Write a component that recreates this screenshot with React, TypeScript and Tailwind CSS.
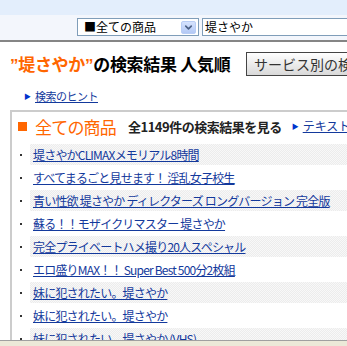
import { ChevronDown } from "lucide-react";

const items = [
  "堤さやかCLIMAXメモリアル8時間",
  "すべてまるごと見せます！ 淫乱女子校生",
  "青い性欲 堤さやか ディレクターズ ロングバージョン 完全版",
  "蘇る！！モザイクリマスター 堤さやか",
  "完全プライベートハメ撮り20人スペシャル",
  "エロ盛りMAX！！ Super Best 500分2枚組",
  "妹に犯されたい。堤さやか",
  "妹に犯されたい。堤さやか",
  "妹に犯されたい。堤さやか (VHS)",
];

export default function App() {
  return (
    <div className="flex h-[346px] w-[347px] flex-col overflow-hidden bg-white font-['Noto_Sans_CJK_JP',sans-serif] text-black">
      {/* top search bar */}
      <div className="h-[15px] shrink-0 bg-[#e3eefc]" />
      <div className="flex h-[25px] shrink-0 items-start gap-[3px] bg-[#f3f6fc] pl-[77px] pt-[3px]">
        <div className="flex h-[18px] w-[122px] shrink-0 items-center justify-between border border-[#7f9db9] bg-white pl-[6px] pr-[2px]">
          <span className="text-[12px] leading-none">■全ての商品</span>
          <div className="flex h-[13px] w-[15px] items-center justify-center rounded-[2px] border border-[#b9cdf5] bg-gradient-to-b from-[#d6e3fd] to-[#b3c8f5]">
            <ChevronDown className="h-[11px] w-[11px] text-[#4d6185]" strokeWidth={3.5} />
          </div>
        </div>
        <div className="flex h-[18px] flex-1 items-center border border-r-0 border-[#7f9db9] bg-white pl-[2px]">
          <span className="text-[12px] leading-none">堤さやか</span>
        </div>
      </div>
      <div className="h-[2px] shrink-0 bg-[#858585]" />

      {/* main */}
      <div className="flex-1 overflow-hidden">
        <div className="mt-[10px] flex h-[24px] items-center whitespace-nowrap pl-[10px]">
          <h1 className="w-[236px] shrink-0 text-[17px] font-bold leading-none tracking-[-0.3px]">
            <span className="text-[#ff6600]">
              <span className="font-['Liberation_Sans',sans-serif]">”</span>堤さやか<span className="font-['Liberation_Sans',sans-serif]">”</span>
            </span>
            の検索結果 人気順
          </h1>
          <div className="flex h-[24px] flex-1 items-center border border-r-0 border-[#444] bg-gradient-to-b from-white to-[#d9d9d9] pl-[7px] text-[14px] text-[#333]">
            サービス別の検索
          </div>
        </div>

        <div className="mt-[10px] flex h-[20px] items-center pl-[24px]">
          <span className="mr-[4px] text-[7px] leading-none text-[#0033cc]">▶</span>
          <a className="text-[11px] leading-none tracking-[-0.5px] text-[#13399c] underline">検索のヒント</a>
        </div>

        <div className="ml-[10px] mt-[4px] border-l-2 border-t-2 border-[#cccccc]">
          <div className="flex h-[31px] items-center whitespace-nowrap pb-[3px] pl-[6px]">
            <div className="h-[9px] w-[9px] shrink-0 bg-[#ff6600]" />
            <span className="ml-[8px] text-[17px] leading-none tracking-[-0.8px] text-[#ff6600]">全ての商品</span>
            <span className="ml-[12px] text-[13px] font-bold leading-none tracking-[-0.5px] text-[#222]">全1149件の検索結果を見る</span>
            <span className="ml-[10px] text-[7px] leading-none text-[#0033cc]">▶</span>
            <a className="ml-[4px] text-[12px] leading-none text-[#13399c] underline">テキストリンク</a>
          </div>
          {items.map((t, i) => (
            <div key={i} className="flex h-[23px] items-center">
              <div className="w-[18px] shrink-0 pl-[8px]">
                <div className="h-[2px] w-[2px] bg-[#333]" />
              </div>
              <div
                className={`flex h-[21px] flex-1 items-center whitespace-nowrap pl-[3px] ${
                  i % 2 === 0
                    ? "bg-[image:repeating-conic-gradient(#ececec_0%_25%,#f8f8f8_0%_50%)] bg-[length:2px_2px]"
                    : ""
                }`}
              >
                <a className="text-[12px] leading-none tracking-[-0.8px] text-[#13399c] underline">{t}</a>
              </div>
            </div>
          ))}
        </div>
      </div>

      {/* status bar */}
      <div className="h-[6px] shrink-0 border-t border-[#a0a0a0] bg-[#ece9d8]" />
    </div>
  );
}
